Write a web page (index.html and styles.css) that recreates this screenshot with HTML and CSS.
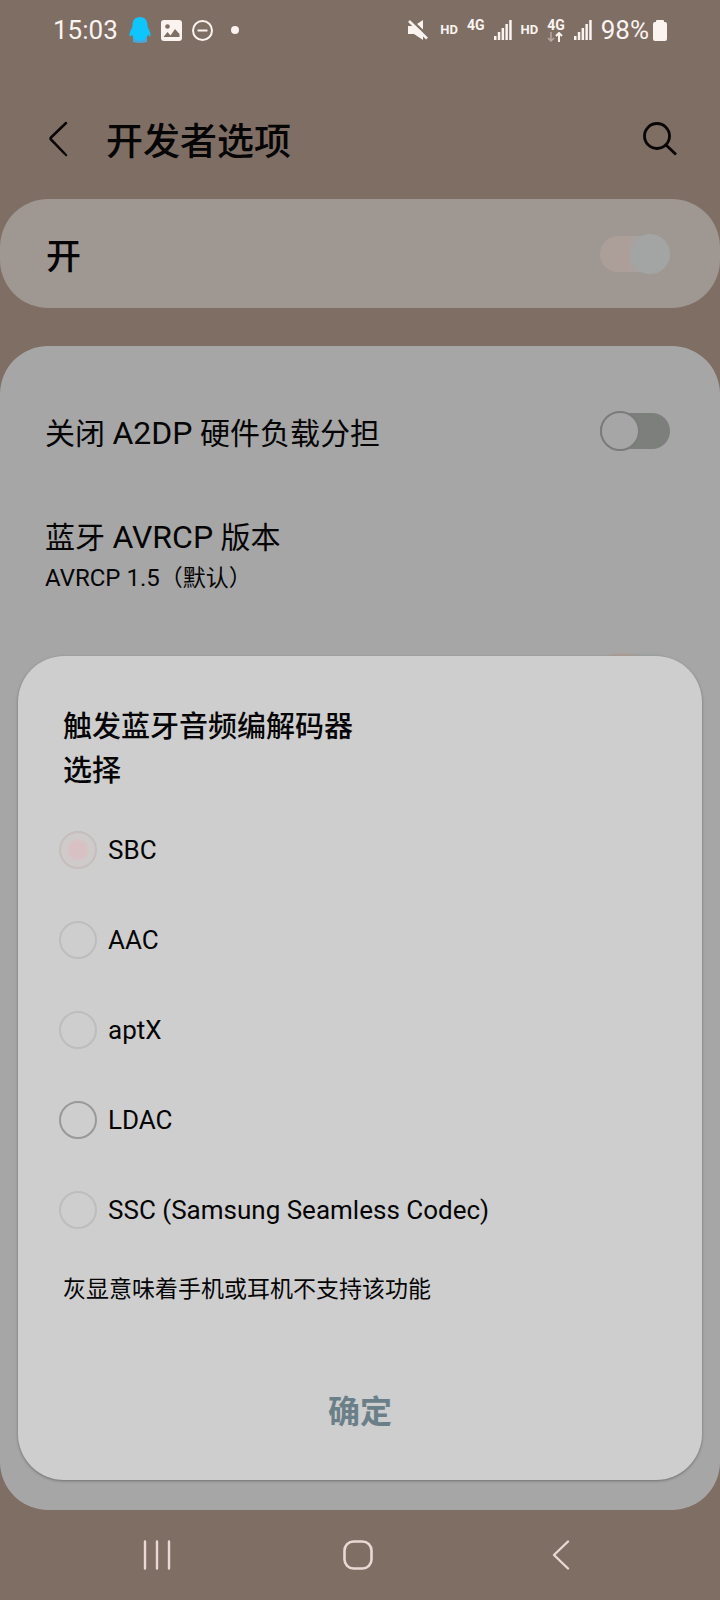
FILE: index.html
```html
<!DOCTYPE html>
<html lang="zh-CN">
<head>
<meta charset="utf-8">
<meta name="viewport" content="width=device-width, initial-scale=1">
<title>开发者选项</title>
<link rel="stylesheet" href="styles.css">
</head>
<body>
<div class="screen">
  <div class="status">
    <div class="status-left">
      <span class="clock">15:03</span>
      <svg width="22" height="26" viewBox="0 0 22 26"><path fill="#4aa5d8" d="M4 21h14v4q-7 2-14 0z"/><path fill="#0fc5fd" d="M11 0C6 0 3.500 3.500 3.500 8.500C3.500 11 0 15 .5 19c.3 1 1.500 0 2.500-1.500C4 21 6 23.500 11 23.500s7-2.500 8-6c1 1.500 2.200 2.500 2.500 1.500.5-4-3-8-3-10.500C18.500 3.500 16 0 11 0z"/></svg>
      <svg width="21" height="21" viewBox="0 0 21 21"><rect width="21" height="21" rx="3" fill="#fbf3ef"/><circle cx="6.500" cy="6.500" r="2.300" fill="#7f6e64"/><path d="M2.500 17l4-5 3 3.500L14 9l4.500 5v3z" fill="#7f6e64"/></svg>
      <svg width="21" height="21" viewBox="0 0 21 21" fill="none" stroke="#fbf3ef" stroke-width="2"><circle cx="10.500" cy="10.500" r="9.500"/><path d="M5.500 10.500h10"/></svg>
      <span class="dot"></span>
    </div>
    <div class="status-right">
      <svg class="mute" width="20" height="20" viewBox="0 0 20 20"><path d="M0 6h6l9-6v20l-9-6H0z" fill="#fbf3ef"/><path d="M1.500 -1.500L21 17" stroke="#7f6e64" stroke-width="2.500"/><path d="M1 1l18 17.500" stroke="#fbf3ef" stroke-width="2.500"/></svg>
      <span class="tag">HD</span>
      <span class="net">4G</span>
      <svg width="18" height="20" viewBox="0 0 18 20" fill="#fbf3ef"><path d="M0 16h2.500v4H0zM3.800 12h2.500v8H3.800zM7.600 8h2.500v12H7.600zM11.400 4h2.500v16h-2.500zM15.200 0h2.500v20h-2.500z"/></svg>
      <span class="tag">HD</span>
      <span class="net net-data">4G
        <svg width="16" height="10" viewBox="0 0 16 10" fill="none" stroke-width="1.500"><path stroke="#b8aaa3" d="M4 0v9M1 6l3 3 3-3"/><path stroke="#fbf3ef" stroke-width="2" d="M12 10V1M9 4l3-3 3 3"/></svg>
      </span>
      <svg width="18" height="20" viewBox="0 0 18 20" fill="#fbf3ef"><path d="M0 16h2.500v4H0zM3.800 12h2.500v8H3.800zM7.600 8h2.500v12H7.600zM11.400 4h2.500v16h-2.500zM15.200 0h2.500v20h-2.500z"/></svg>
      <span class="battery">98%</span>
      <svg width="14" height="21" viewBox="0 0 14 21" fill="#fbf3ef"><rect y="2" width="14" height="19" rx="2"/><rect x="3" width="8" height="4" rx="1"/></svg>
    </div>
  </div>

  <header class="header">
    <button class="icon-btn" type="button" aria-label="返回"><svg width="20" height="36" viewBox="0 0 20 36" fill="none" stroke="#080504" stroke-width="2.500" stroke-linecap="round" stroke-linejoin="round"><path d="M18 2L3 16.500q-1 1 0 2L18 34"/></svg></button>
    <h1>开发者选项</h1>
    <button class="icon-btn" type="button" aria-label="搜索"><svg width="34" height="34" viewBox="0 0 34 34" fill="none" stroke="#080504" stroke-width="2.800"><circle cx="14" cy="14" r="12.500"/><path d="M22.500 22.500L33 32.500"/></svg></button>
  </header>

  <label class="card master"><span>开</span><input class="switch" type="checkbox" role="switch" checked></label>

  <main class="card settings">
    <label class="row"><span>关闭 <span class="latin">A2DP</span> 硬件负载分担</span><input class="switch" type="checkbox" role="switch"></label>
    <div class="entry"><span>蓝牙 <span class="latin">AVRCP</span> 版本</span><small><span class="latin">AVRCP 1.5</span>（默认）</small></div>
    <div class="row row-last"><input class="switch" type="checkbox" role="switch" aria-label="开关" checked></div>
  </main>

  <nav class="nav">
    <button type="button" aria-label="最近"><svg width="28" height="30" viewBox="0 0 28 30" stroke="#ebd8d5" stroke-width="2.400" stroke-linecap="round"><path d="M2 1.500v27M14 1.500v27M26 1.500v27"/></svg></button>
    <button class="home" type="button" aria-label="主页"><svg width="30" height="30" viewBox="0 0 30 30" fill="none" stroke="#ebd8d5" stroke-width="2.600"><rect x="1.500" y="1.500" width="27" height="27" rx="9"/></svg></button>
    <button type="button" aria-label="返回"><svg width="18" height="30" viewBox="0 0 18 30" fill="none" stroke="#ebd8d5" stroke-width="2.400" stroke-linecap="round" stroke-linejoin="round"><path d="M16 1.500L2 15l14 13.500"/></svg></button>
  </nav>

  <section class="dialog" role="dialog" aria-labelledby="dialog-title">
    <h2 id="dialog-title">触发蓝牙音频编解码器<br>选择</h2>
    <div class="options">
      <label><input type="radio" name="codec" disabled checked>SBC</label>
      <label><input type="radio" name="codec" disabled>AAC</label>
      <label><input type="radio" name="codec" disabled>aptX</label>
      <label><input type="radio" name="codec">LDAC</label>
      <label><input type="radio" name="codec" disabled>SSC (Samsung Seamless Codec)</label>
    </div>
    <p>灰显意味着手机或耳机不支持该功能</p>
    <button class="confirm" type="button">确定</button>
  </section>
</div>
</body>
</html>
```
FILE: styles.css
```css
*,
*::before { box-sizing: border-box; }

body {
  margin: 0;
  background: #7f6e64;
  color: #050505;
  font-family: Roboto, "Noto Sans CJK SC", sans-serif;
}

button {
  padding: 0;
  border: 0;
  background: none;
  font: inherit;
  color: inherit;
}

svg { display: block; flex: none; }

.screen {
  position: relative;
  display: flex;
  flex-direction: column;
  min-height: 100vh;
}

.status {
  display: flex;
  justify-content: space-between;
  align-items: center;
  height: 60px;
  padding: 0 53px;
  color: #fbf3ef;
  font-size: 26px;
}

.status-left,
.status-right {
  display: flex;
  align-items: center;
}

.status-left { gap: 10px; }
.status-right { gap: 9px; }

.clock { margin-right: 1px; }

.dot {
  width: 8px;
  height: 8px;
  margin-left: 8px;
  border-radius: 50%;
  background: #fbf3ef;
}

.mute { margin-right: 3px; }

.tag,
.net {
  font-size: 14px;
  line-height: 14px;
  font-weight: 700;
}

.tag { font-size: 13px; }

.net { padding-bottom: 10px; }

.net-data { padding: 0; }

.battery { margin-right: -5px; }

.header {
  display: flex;
  align-items: center;
  height: 139px;
  padding: 18px 43px 0 48px;
}

.header h1 {
  flex: 1;
  margin: 8px 0 0 38px;
  font-size: 37px;
  line-height: 44px;
  font-weight: 500;
}

.card {
  border-radius: 48px;
  background: #a6a6a6;
}

.master {
  display: flex;
  align-items: center;
  justify-content: space-between;
  height: 109px;
  padding: 0 50px 0 46px;
  background: #9e9792;
  font-size: 35px;
  font-weight: 500;
}

.settings {
  flex: 1;
  margin-top: 38px;
  padding: 36px 50px 0 45px;
}

.row {
  display: flex;
  align-items: center;
  justify-content: space-between;
  height: 98px;
  font-size: 30px;
}

.row-last { justify-content: flex-end; }

.entry {
  display: flex;
  flex-direction: column;
  height: 142px;
  padding-top: 36px;
  font-size: 30px;
  line-height: 42px;
}

.entry small {
  margin-top: 3px;
  font-size: 23px;
  line-height: 32px;
}

.latin { font-size: 32px; }
.entry small .latin { font-size: 24px; }

.switch {
  appearance: none;
  display: flex;
  align-items: center;
  flex: none;
  width: 70px;
  height: 36px;
  margin: 0;
  border-radius: 18px;
  background: #7c7f7b;
}

.switch::before {
  content: "";
  flex: none;
  width: 40px;
  height: 40px;
  border: 2px solid #7a7c7a;
  border-radius: 50%;
  background: #a6a6a6;
}

.switch:checked {
  justify-content: flex-end;
  background: linear-gradient(90deg, #ac9f99 40%, #a3a4a4 60%);
}

.switch:checked::before {
  border-color: #a3a4a4;
  background: #a3a4a4;
}

.dialog {
  position: absolute;
  right: 18px;
  bottom: 120px;
  left: 18px;
  display: flex;
  flex-direction: column;
  padding: 49px 41px 44px;
  border-radius: 46px;
  background: #cecece;
  box-shadow: 0 1px 3px #00000055;
}

.dialog h2 {
  margin: 0 4px 12px;
  font-size: 29px;
  line-height: 44px;
  font-weight: 500;
}

.options label {
  display: flex;
  align-items: center;
  gap: 11px;
  height: 90px;
  font-size: 26px;
}

.options input {
  appearance: none;
  flex: none;
  width: 38px;
  height: 38px;
  margin: 0;
  border: 2px solid #999;
  border-radius: 50%;
}

.options input:disabled { border-color: #bdbdbd; }

.options input:checked {
  border-color: #c6bdbd;
  background: radial-gradient(circle, #d8c0c3 0 8px, #d0cbcb 12px);
}

.dialog p {
  margin: 19px 4px 0;
  font-size: 23px;
  line-height: 32px;
}

.confirm {
  align-self: center;
  margin-top: 82px;
  color: #6b7f89;
  font-size: 32px;
  line-height: 48px;
  font-weight: 700;
}

.nav {
  position: relative;
  display: flex;
  justify-content: space-between;
  align-items: center;
  height: 90px;
  padding: 0 150px 0 143px;
}

.home { margin-right: 8px; }
```
